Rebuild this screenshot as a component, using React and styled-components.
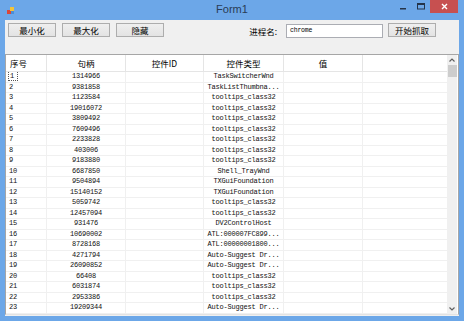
import React from 'react';
import styled, { createGlobalStyle } from 'styled-components';

const GlobalStyle = createGlobalStyle`
  html, body {
    margin: 0;
    padding: 0;
    background: #6ca7e8;
  }
  * {
    box-sizing: border-box;
  }
`;

const Window = styled.div`
  width: 464px;
  height: 321px;
  background: #6ca7e8;
  display: flex;
  flex-direction: column;
  overflow: hidden;
  font-family: "Noto Sans CJK SC", "Liberation Sans", sans-serif;
`;

const TitleBar = styled.div`
  height: 20px;
  display: flex;
  align-items: flex-start;
  position: relative;
  padding-left: 7px;
`;

const AppIcon = styled.svg`
  margin-top: 7px;
`;

const Title = styled.div`
  position: absolute;
  left: 0;
  right: 0;
  top: 3px;
  text-align: center;
  font-family: "Liberation Sans", Arial, sans-serif;
  font-size: 11px;
  color: #2a3c55;
  pointer-events: none;
`;

const Caption = styled.div`
  margin-left: auto;
  margin-right: 6px;
  display: flex;
  align-items: flex-start;
`;

const CaptionButton = styled.div`
  width: ${p => p.wide ? 28 : 18}px;
  height: 13px;
  display: flex;
  align-items: center;
  justify-content: center;
  background: ${p => p.close ? '#c75050' : 'transparent'};
`;

const Client = styled.div`
  flex: 1;
  margin: 0 5px 5px 5px;
  background: #f0f0f0;
  display: flex;
  flex-direction: column;
`;

const Toolbar = styled.div`
  height: 34px;
  display: flex;
  align-items: flex-start;
  padding: 3px 23px 0 3px;
  gap: 6px;
`;

const Button = styled.div`
  width: 48px;
  height: 14px;
  border: 1px solid #adadad;
  background: linear-gradient(#efefef, #e3e3e3);
  font-size: 8.5px;
  line-height: 12px;
  text-align: center;
  color: #000;
`;

const RightGroup = styled.div`
  margin-left: auto;
  display: flex;
  align-items: flex-start;
`;

const Label = styled.div`
  font-size: 8.5px;
  line-height: 14px;
  margin-top: 1px;
  margin-right: 9px;
  color: #000;
`;

const TextBox = styled.div`
  width: 97px;
  height: 14px;
  margin-top: 1px;
  margin-right: 5px;
  border: 1px solid #abadb3;
  background: #fff;
  font-family: "Liberation Mono", monospace;
  font-size: 6.5px;
  line-height: 12px;
  padding-left: 3px;
  letter-spacing: -0.2px;
  color: #000;
`;

const ListView = styled.div`
  height: 261px;
  border: 1px solid #a6a6a6;
  border-bottom-color: #e3e3e3;
  background: #fff;
  display: flex;
  overflow: hidden;
`;

const ListBody = styled.div`
  flex: 1;
  display: flex;
  flex-direction: column;
`;

const HeaderRow = styled.div`
  height: 17px;
  display: flex;
  border-bottom: 1px solid #e5e5e5;
  flex-shrink: 0;
`;

const HeaderCell = styled.div`
  width: ${p => p.w ? p.w + 'px' : 'auto'};
  flex: ${p => p.w ? 'none' : 1};
  border-right: ${p => p.w ? '1px solid #e5e5e5' : 'none'};
  font-size: 8.5px;
  line-height: 16px;
  text-align: ${p => p.left ? 'left' : 'center'};
  padding-left: ${p => p.left ? '4px' : '0'};
  color: #000;
  white-space: nowrap;
`;

const Row = styled.div`
  height: 10.5px;
  display: flex;
  border-bottom: 1px solid #f0f0f0;
  flex-shrink: 0;
`;

const Cell = styled.div`
  width: ${p => p.w ? p.w + 'px' : 'auto'};
  flex: ${p => p.w ? 'none' : 1};
  border-right: ${p => p.w ? '1px solid #f0f0f0' : 'none'};
  font-family: "Liberation Mono", monospace;
  font-size: 7px;
  letter-spacing: -0.2px;
  line-height: 9.5px;
  text-align: ${p => p.left ? 'left' : 'center'};
  padding-left: ${p => p.left ? '3px' : '0'};
  color: #111;
  white-space: nowrap;
  overflow: hidden;
`;

const Focus = styled.span`
  outline: 1px dotted #555;
  outline-offset: 0;
  padding: 0 3px 0 1px;
`;

const ScrollBar = styled.div`
  width: 10px;
  margin-right: 1px;
  background: #f0f0f0;
  display: flex;
  flex-direction: column;
  align-items: center;
`;

const Arrow = styled.div`
  height: 10px;
  display: flex;
  align-items: center;
  justify-content: center;
`;

const Thumb = styled.div`
  width: 9px;
  height: 12px;
  background: #cdcdcd;
`;

const Track = styled.div`
  flex: 1;
`;

const cols = [41, 79, 78, 80, 79];

const rows = [
  ['1', '1314966', 'TaskSwitcherWnd'],
  ['2', '9381858', 'TaskListThumbna...'],
  ['3', '1123584', 'tooltips_class32'],
  ['4', '19016072', 'tooltips_class32'],
  ['5', '3809492', 'tooltips_class32'],
  ['6', '7609496', 'tooltips_class32'],
  ['7', '2233828', 'tooltips_class32'],
  ['8', '403006', 'tooltips_class32'],
  ['9', '9183880', 'tooltips_class32'],
  ['10', '6687850', 'Shell_TrayWnd'],
  ['11', '9504894', 'TXGuiFoundation'],
  ['12', '15140152', 'TXGuiFoundation'],
  ['13', '5059742', 'tooltips_class32'],
  ['14', '12457094', 'tooltips_class32'],
  ['15', '931476', 'DV2ControlHost'],
  ['16', '10690002', 'ATL:000007FC899...'],
  ['17', '8728168', 'ATL:00000001800...'],
  ['18', '4271794', 'Auto-Suggest Dr...'],
  ['19', '26090852', 'Auto-Suggest Dr...'],
  ['20', '66408', 'tooltips_class32'],
  ['21', '6031874', 'tooltips_class32'],
  ['22', '2953386', 'tooltips_class32'],
  ['23', '19209344', 'Auto-Suggest Dr...'],
];

const App = () => {
  return (
    <Window>
      <GlobalStyle />
      <TitleBar>
        <AppIcon width="8" height="8" viewBox="0 0 8 8">
          <rect x="0" y="3" width="4" height="4" fill="#d9473a" />
          <rect x="3" y="0" width="4" height="4" fill="#f2c43a" />
          <rect x="4" y="4" width="3" height="3" fill="#4a8fd8" />
        </AppIcon>
        <Title>Form1</Title>
        <Caption>
          <CaptionButton>
            <svg width="7" height="7" viewBox="0 0 7 7">
              <rect x="0" y="5" width="6" height="1.5" fill="#25354a" />
            </svg>
          </CaptionButton>
          <CaptionButton>
            <svg width="8" height="7" viewBox="0 0 8 7">
              <rect x="0.5" y="0.5" width="7" height="5.5" fill="none" stroke="#25354a" strokeWidth="1" />
              <rect x="0.5" y="0.5" width="7" height="1.5" fill="#25354a" />
            </svg>
          </CaptionButton>
          <CaptionButton wide close>
            <svg width="7" height="7" viewBox="0 0 7 7">
              <path d="M1 1 L6 6 M6 1 L1 6" stroke="#fff" strokeWidth="1.4" />
            </svg>
          </CaptionButton>
        </Caption>
      </TitleBar>
      <Client>
        <Toolbar>
          <Button>最小化</Button>
          <Button>最大化</Button>
          <Button>隐藏</Button>
          <RightGroup>
            <Label>进程名:</Label>
            <TextBox>chrome</TextBox>
            <Button>开始抓取</Button>
          </RightGroup>
        </Toolbar>
        <ListView>
          <ListBody>
            <HeaderRow>
              <HeaderCell w={cols[0]} left>序号</HeaderCell>
              <HeaderCell w={cols[1]}>句柄</HeaderCell>
              <HeaderCell w={cols[2]}>控件ID</HeaderCell>
              <HeaderCell w={cols[3]}>控件类型</HeaderCell>
              <HeaderCell w={cols[4]}>值</HeaderCell>
              <HeaderCell />
            </HeaderRow>
            {rows.map((r, i) => (
              <Row key={r[0]}>
                <Cell w={cols[0]} left>{i === 0 ? <Focus>{r[0]}</Focus> : r[0]}</Cell>
                <Cell w={cols[1]}>{r[1]}</Cell>
                <Cell w={cols[2]} />
                <Cell w={cols[3]}>{r[2]}</Cell>
                <Cell w={cols[4]} />
                <Cell />
              </Row>
            ))}
          </ListBody>
          <ScrollBar>
            <Arrow>
              <svg width="6" height="4" viewBox="0 0 6 4">
                <path d="M0.5 3.5 L3 1 L5.5 3.5" fill="none" stroke="#606060" strokeWidth="1.2" />
              </svg>
            </Arrow>
            <Thumb />
            <Track />
            <Arrow>
              <svg width="6" height="4" viewBox="0 0 6 4">
                <path d="M0.5 0.5 L3 3 L5.5 0.5" fill="none" stroke="#606060" strokeWidth="1.2" />
              </svg>
            </Arrow>
          </ScrollBar>
        </ListView>
      </Client>
    </Window>
  );
};

export default App;
